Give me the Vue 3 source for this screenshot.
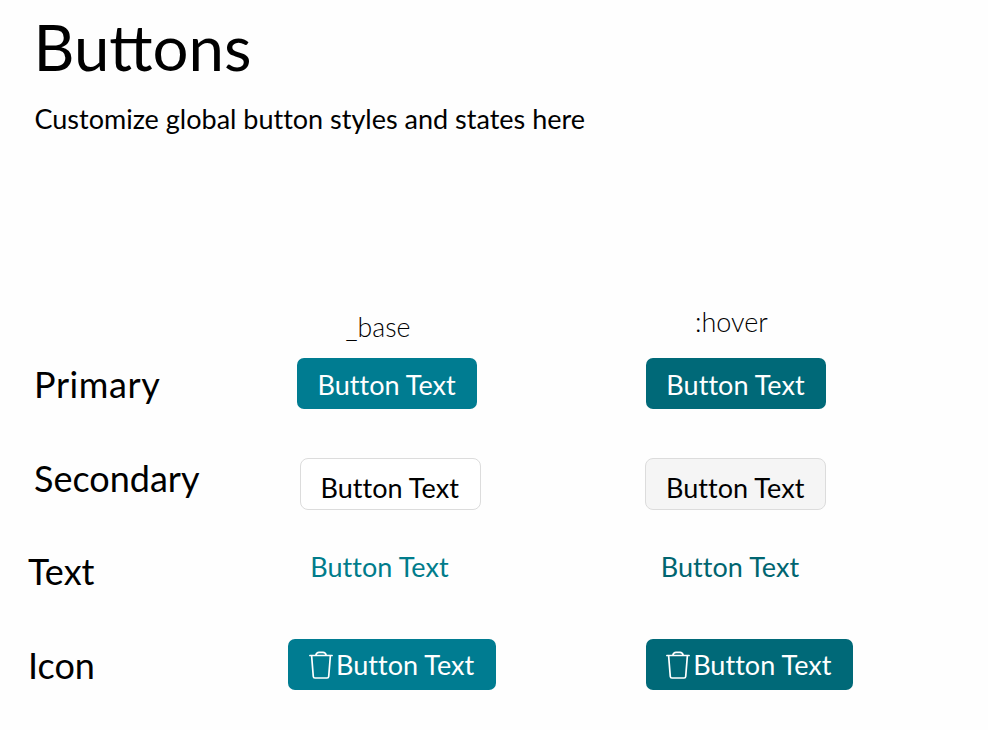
<script setup>
const rows = [
  { label: 'Primary', kind: 'primary' },
  { label: 'Secondary', kind: 'secondary' },
  { label: 'Text', kind: 'text' },
  { label: 'Icon', kind: 'icon' },
]
const states = ['base', 'hover']
</script>

<template>
  <main class="page">
    <h1>Buttons</h1>
    <p class="intro">Customize global button styles and states here</p>
    <div class="heads">
      <span class="head-base">_base</span>
      <span class="head-hover">:hover</span>
    </div>
    <section v-for="row in rows" :key="row.kind" class="row" :class="'row-' + row.kind">
      <h2>{{ row.label }}</h2>
      <button v-for="state in states" :key="state" type="button" class="btn" :class="[row.kind, state]">
        <svg v-if="row.kind === 'icon'" class="trash" viewBox="0 0 24 30" fill="none" stroke="currentColor" stroke-width="1.7" stroke-linecap="round" stroke-linejoin="round">
          <path d="M0.900 5.500H23.100M6.800 5.200Q7.500 2.300 10 2.300H14Q16.500 2.300 17.200 5.200M2.600 5.500L4.300 26.500Q4.400 28 5.900 28H18.100Q19.600 28 19.700 26.500L21.400 5.500" />
        </svg>
        <span>Button Text</span>
      </button>
    </section>
  </main>
</template>

<style>
body { margin: 0; background: #fefefe; }
</style>

<style scoped>
.page { box-sizing: border-box; width: 988px; height: 730px; padding-top: 8px; font-family: Lato, sans-serif; color: #000; overflow: hidden; }
h1 { margin: 0 0 0 33.500px; font-size: 63.500px; line-height: 77px; font-weight: 400; }
.intro { margin: 18px 0 0 34.5px; font-size: 27px; line-height: 32px; font-variant-ligatures: none; }
.heads { display: grid; grid-template-columns: 345.500px 349.500px 1fr; height: 52px; margin-top: 171px; font-size: 27px; line-height: 32px; font-weight: 300; }
.head-base { grid-column: 2; padding-top: 5px; font-size: 26.700px; }
.head-hover { grid-column: 3; }
.row { display: grid; grid-template-columns: 296.800px 348.900px 1fr; align-items: start; height: 94px; }
.row-secondary { grid-template-columns: 299.500px 345.500px 1fr; height: 93px; }
.row-text { grid-template-columns: 310.300px 350.500px 1fr; }
.row-icon { grid-template-columns: 288.400px 357.200px 1fr; }
h2 { margin: 5px 0 0 34px; font-size: 36px; line-height: 43px; font-weight: 400; }
.row-primary h2 { letter-spacing: 0.6px; }
.row-text h2, .row-icon h2 { margin-left: 28px; }
.btn { box-sizing: border-box; display: flex; align-items: center; justify-content: center; width: 180.200px; height: 51px; padding: 3px 0.500px 0 0; border: 0; border-radius: 7px; font: 400 27px/32px Lato, sans-serif; font-variant-ligatures: none; letter-spacing: 0.05px; color: #fff; background: #007c91; white-space: nowrap; }
.btn.hover { background: #006978; }
.btn.secondary { width: 181.400px; height: 52px; margin-top: 6px; padding: 7px 1px 0 0; border: 1.500px solid #dcdcdc; border-radius: 8px; color: #000; background: #fff; }
.btn.secondary.hover { background: #f5f5f5; }
.btn.text { width: auto; justify-self: start; height: 32px; margin-top: 6px; padding: 0; color: #007c8b; background: none; }
.btn.text.hover { color: #006570; }
.btn.icon { width: 207.500px; gap: 3px; padding: 1px 1px 0 0; }
.trash { flex: none; width: 24px; height: 30px; margin-top: -1px; }
</style>
